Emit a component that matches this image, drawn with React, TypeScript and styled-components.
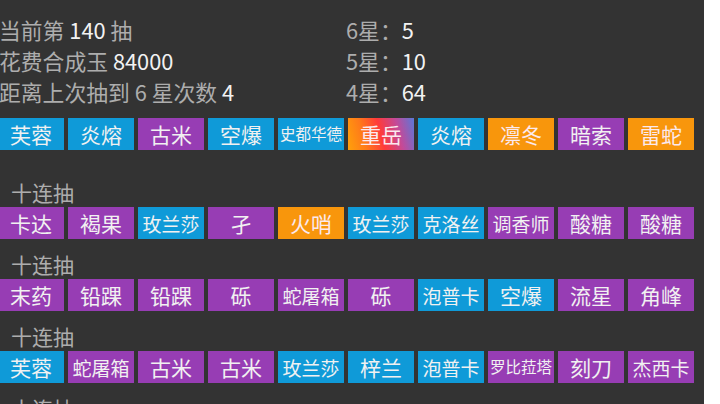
import React from "react";
import styled, { createGlobalStyle } from "styled-components";

const GlobalStyle = createGlobalStyle`
  html, body { margin: 0; padding: 0; background: #ffffff; overflow: hidden; }
  body { font-family: "Noto Sans CJK SC", "Noto Sans", sans-serif; }
`;

type Kind = "b" | "p" | "o" | "g";

const bg: Record<Kind, string> = {
  b: "#0f9ad8",
  p: "#973db4",
  o: "#f8960c",
  g: "linear-gradient(75deg, #ffa10a 0%, #ff7a1a 25%, #ff3a3a 50%, #c24a9a 75%, #5a78d8 100%)",
};

const Page = styled.div`
  width: 704px;
  height: 404px;
  background: #333333;
  overflow: hidden;
`;

const Inner = styled.div`
  margin-left: -2px;
  padding-top: 14px;
`;

const Stats = styled.div`
  display: grid;
  grid-template-columns: 347px 1fr;
  grid-auto-rows: 31px;
  font-size: 21.8px;
  line-height: 31px;
  color: #adadad;
  padding-left: 1px;
`;

const Val = styled.span`
  color: #f2f2f2;
`;

const TagRow = styled.div<{ $top?: number }>`
  display: flex;
  gap: 4px;
  margin-top: ${(p) => p.$top ?? 0}px;
`;

const Tag = styled.div<{ $kind: Kind; $size: number }>`
  width: 66px;
  height: 32px;
  flex: none;
  display: flex;
  align-items: center;
  justify-content: center;
  background: ${(p) => bg[p.$kind]};
  color: ${(p) => (p.$kind === "o" || p.$kind === "g" ? "#fbe9ee" : "#f1f1f1")};
  font-size: ${(p) => p.$size}px;
  line-height: 1;
  white-space: nowrap;
  box-sizing: border-box;
`;

const Group = styled.div<{ $first?: boolean }>`
  margin-top: ${(p) => (p.$first ? 29 : 12)}px;
`;

const Label = styled.div`
  height: 26px;
  line-height: 26px;
  font-size: 21px;
  color: #adadad;
  padding-left: 13px;
  margin-bottom: 2px;
`;

const sizeFor = (name: string) =>
  name.length >= 4 ? 15.5 : name.length === 3 ? 19 : 21;

type Item = [string, Kind];

const first: Item[] = [
  ["芙蓉", "b"], ["炎熔", "b"], ["古米", "p"], ["空爆", "b"], ["史都华德", "b"],
  ["重岳", "g"], ["炎熔", "b"], ["凛冬", "o"], ["暗索", "p"], ["雷蛇", "o"],
];

const groups: Item[][] = [
  [
    ["卡达", "p"], ["褐果", "p"], ["玫兰莎", "b"], ["孑", "p"], ["火哨", "o"],
    ["玫兰莎", "b"], ["克洛丝", "b"], ["调香师", "p"], ["酸糖", "p"], ["酸糖", "p"],
  ],
  [
    ["末药", "p"], ["铅踝", "p"], ["铅踝", "p"], ["砾", "p"], ["蛇屠箱", "p"],
    ["砾", "p"], ["泡普卡", "b"], ["空爆", "b"], ["流星", "p"], ["角峰", "p"],
  ],
  [
    ["芙蓉", "b"], ["蛇屠箱", "p"], ["古米", "p"], ["古米", "p"], ["玫兰莎", "b"],
    ["梓兰", "b"], ["泡普卡", "b"], ["罗比菈塔", "p"], ["刻刀", "p"], ["杰西卡", "p"],
  ],
  [],
];

const Tags = ({ items, top }: { items: Item[]; top?: number }) => (
  <TagRow $top={top}>
    {items.map(([n, k], i) => (
      <Tag key={i} $kind={k} $size={sizeFor(n)}>
        {n}
      </Tag>
    ))}
  </TagRow>
);

export default function App() {
  return (
    <>
      <GlobalStyle />
      <Page>
        <Inner>
          <Stats>
            <div>
              当前第 <Val>140</Val> 抽
            </div>
            <div>
              6星：<Val>5</Val>
            </div>
            <div>
              花费合成玉 <Val>84000</Val>
            </div>
            <div>
              5星：<Val>10</Val>
            </div>
            <div>
              距离上次抽到 6 星次数 <Val>4</Val>
            </div>
            <div>
              4星：<Val>64</Val>
            </div>
          </Stats>
          <Tags items={first} top={11} />
          {groups.map((g, i) => (
            <Group key={i} $first={i === 0}>
              <Label>十连抽</Label>
              {g.length > 0 && <Tags items={g} />}
            </Group>
          ))}
        </Inner>
      </Page>
    </>
  );
}
